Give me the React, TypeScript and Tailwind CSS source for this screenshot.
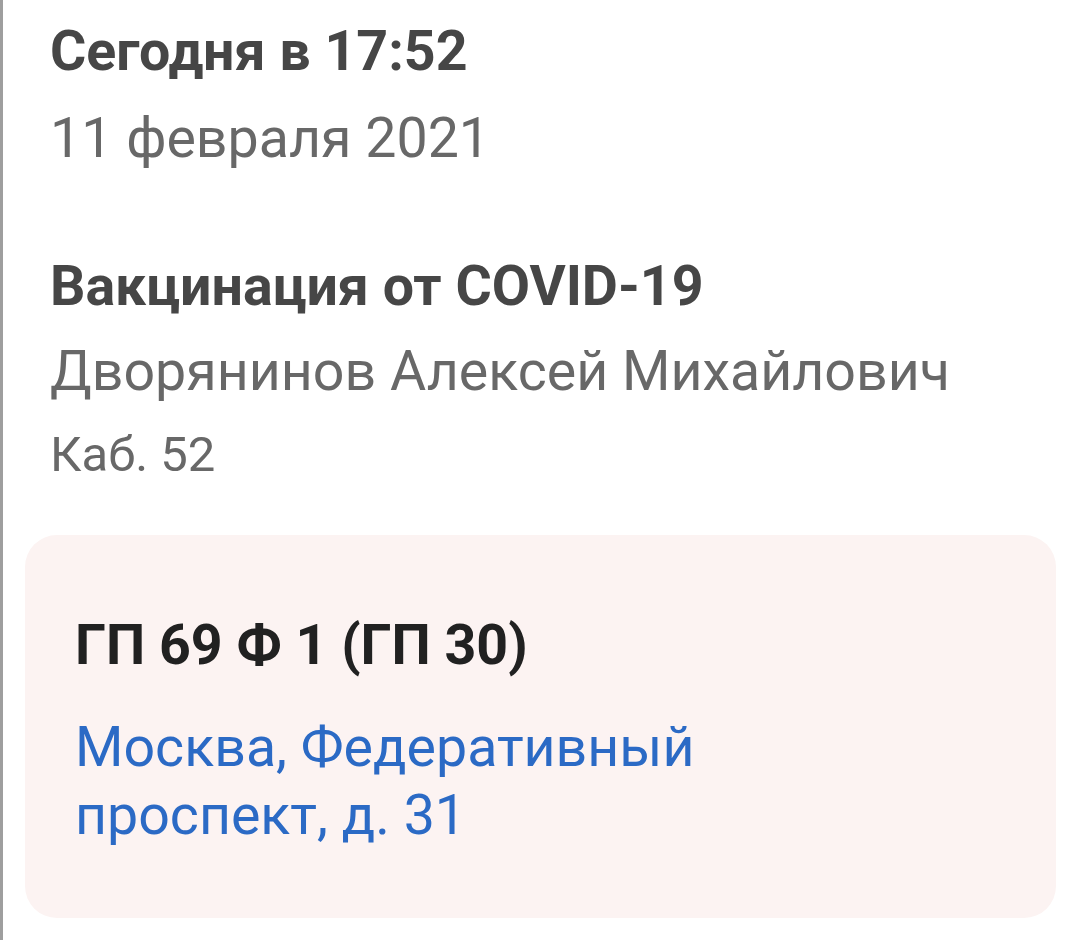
export default function App() {
  return (
    <div className="w-[1080px] h-[940px] bg-white border-l-[3px] border-[#9e9e9e] overflow-hidden" style={{ fontFamily: "Roboto, 'Noto Sans', sans-serif" }}>
      <div className="pl-[47px] pt-[8px]">
        <div className="text-[55.5px] leading-[87px] font-bold text-[#464646]">Сегодня в 17:52</div>
        <div className="text-[55.5px] leading-[87px] text-[#686868]">11 февраля 2021</div>
      </div>
      <div className="pl-[47px] mt-[62px]">
        <div className="text-[55.5px] leading-[85px] font-bold text-[#464646]">Вакцинация от COVID-19</div>
        <div className="text-[55.5px] leading-[85px] text-[#686868]">Дворянинов Алексей Михайлович</div>
        <div className="text-[49px] leading-[82px] text-[#686868]">Каб. 52</div>
      </div>
      <div className="ml-[22px] mr-[24px] mt-[39px] h-[383px] rounded-[32px] bg-[#fcf3f2] px-[50px] pt-[81px]">
        <div className="text-[55.5px] leading-[60px] font-bold text-[#212121]">ГП 69 Ф 1 (ГП 30)</div>
        <div className="mt-[38px] text-[55.5px] leading-[68px] text-[#2b6ac5] max-w-[640px]">Москва, Федеративный проспект, д. 31</div>
      </div>
    </div>
  );
}
